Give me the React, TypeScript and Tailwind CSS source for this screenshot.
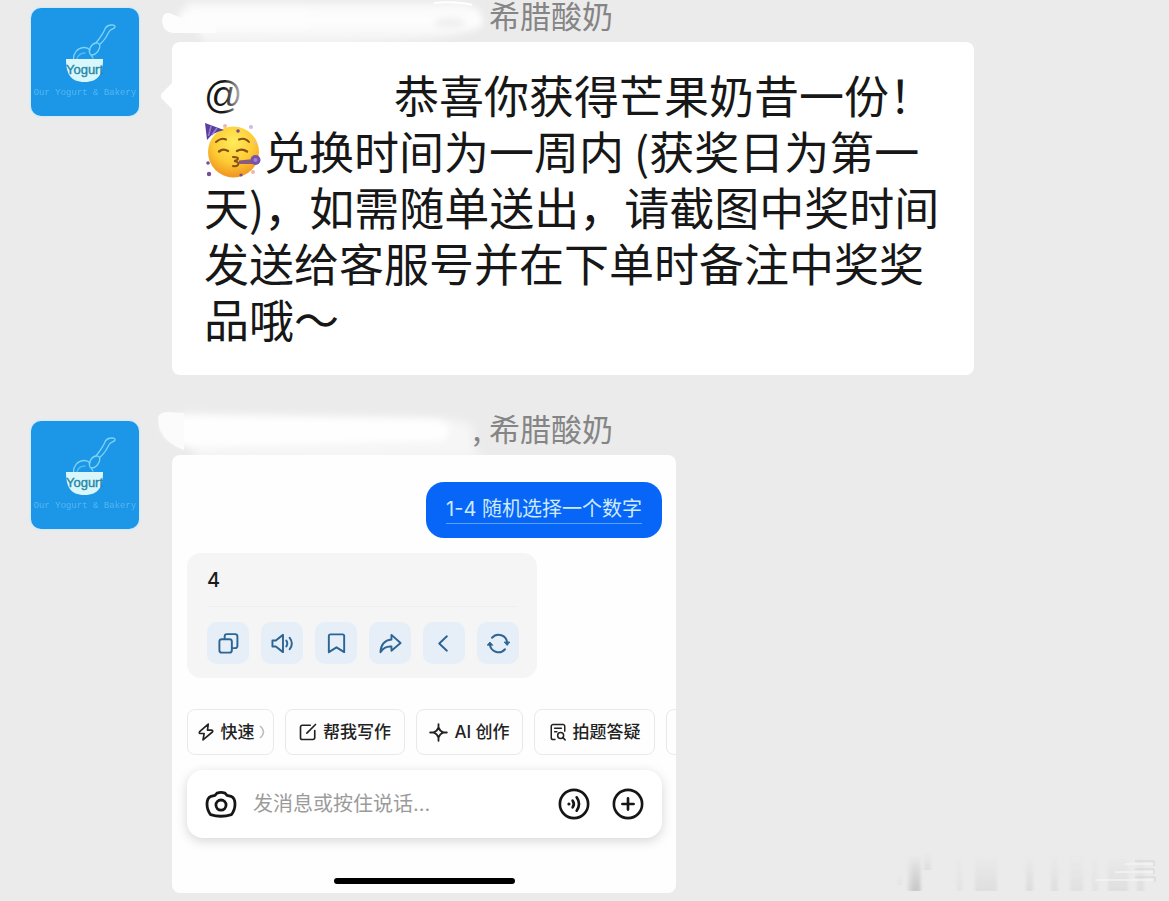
import type { ReactNode } from 'react';

function Avatar() {
  return (
    <svg
      viewBox="0 0 108 108"
      role="img"
      aria-label="Yogurt"
      className="size-[108px] shrink-0 rounded-[10px] bg-[#1c97e8] shadow-[0_0_2px_1px_#cdeafa]"
    >
      <g fill="none" stroke="#7fd3f3" strokeWidth="1.3" strokeLinecap="round" strokeLinejoin="round">
        <path d="M42.500 51c0-6 4-11 10-11.500 3-.2 5 .8 6.500 2.500" />
        <path d="M46 51c1-4 4-6 8-6" opacity=".6" />
        <path d="M59 46c-2-4 1-10 6-11 3-.4 4.500 2 3.500 5-1.200 4-4.500 7-7.500 7-1 0-1.600-.4-2-1z" />
        <path d="M65 35c3-4 7-9 8.500-13 1-3 4-5 7.500-5 2 0 3.500.6 3 2-.4 1.500-3 2-4.500 3-2 1.400-3 5-5 8-1.800 2.600-4 5-5.800 6.500" />
        <path d="M60 47l2 3" />
      </g>
      <path d="M35 51H72c0 14-4 23-18.500 23S35 65 35 51z" fill="#d9f7fb" />
      <text x="53.500" y="66" textAnchor="middle" fontSize="13" fontFamily="'Liberation Sans',sans-serif" fill="#2487a8" stroke="#2487a8" strokeWidth=".4">
        Yogurt
      </text>
      <text x="54" y="87" textAnchor="middle" fontSize="9" fontFamily="'Liberation Mono',monospace" fill="#66c1f3" opacity=".75">
        Our Yogurt &amp; Bakery
      </text>
    </svg>
  );
}

function BrushTop() {
  return (
    <svg aria-hidden="true" viewBox="0 0 340 60" className="absolute -left-3 top-0 h-[60px] w-[340px]">
      <defs>
        <filter id="soft-top" x="-10%" y="-40%" width="120%" height="180%">
          <feGaussianBlur stdDeviation="3" />
        </filter>
        <linearGradient id="fade-top" x1="0" y1="0" x2="0" y2="1">
          <stop offset="0" stopColor="#f7f7f7" />
          <stop offset=".4" stopColor="#fefefe" />
          <stop offset=".75" stopColor="#f6f6f6" />
          <stop offset="1" stopColor="#f1f1f1" />
        </linearGradient>
      </defs>
      <path d="M24 3H300Q326 6 322 26Q300 40 200 42L46 46Z" fill="url(#fade-top)" filter="url(#soft-top)" />
      <path d="M2 20Q3 12 9 13L22 18L56 22V33H12Q2 31 2 20Z" fill="#fdfdfd" />
      <path d="M20 10H150V28H20Z" fill="#fdfdfd" filter="url(#soft-top)" />
      <ellipse cx="290" cy="23" rx="16" ry="5" fill="#efefef" filter="url(#soft-top)" />
      <path d="M274 3Q296 1 312 5" stroke="#fff" strokeWidth="2" fill="none" />
    </svg>
  );
}

function BrushBottom() {
  return (
    <svg aria-hidden="true" viewBox="0 0 340 70" className="absolute -left-4 -top-2 h-[70px] w-[340px]">
      <defs>
        <filter id="soft-bottom" x="-10%" y="-40%" width="120%" height="180%">
          <feGaussianBlur stdDeviation="4" />
        </filter>
      </defs>
      <path d="M24 8L270 12Q312 14 318 24Q312 44 330 52L190 54H40Z" fill="#f6f6f6" filter="url(#soft-bottom)" />
      <path d="M8 11L280 15Q304 22 286 36L34 42Q8 36 6 22Z" fill="#fefefe" filter="url(#soft-top)" />
      <path d="M2 12Q4 7 12 7L28 8V45Q8 38 3 22Z" fill="#fbfbfb" />
    </svg>
  );
}

function Message({ brush, prefix, children }: { brush: ReactNode; prefix?: string; children: ReactNode }) {
  return (
    <article className="flex gap-[33px]">
      <Avatar />
      <div className="-mt-2 min-w-0 flex-1">
        <header className="relative flex h-[42px] text-[31px] leading-[30px] text-[#858585]">
          {brush}
          <span className="relative w-[317px] pr-[8px] text-right">{prefix}</span>
          <span className="relative">希腊酸奶</span>
        </header>
        {children}
      </div>
    </article>
  );
}

function PartyFace() {
  return (
    <svg viewBox="0 0 58 56" role="img" aria-label="🥳" className="mr-0.5 inline-block h-[56px] w-[58px] align-top">
      <defs>
        <radialGradient id="face" cx=".5" cy=".3" r=".75">
          <stop offset="0" stopColor="#ffec5c" />
          <stop offset=".55" stopColor="#fdcb34" />
          <stop offset="1" stopColor="#ee8a1c" />
        </radialGradient>
      </defs>
      <circle cx="29.500" cy="29" r="25.500" fill="url(#face)" />
      <path d="M1 0L20 7Q9 9 3 17Z" fill="#5b3d9e" />
      <path d="M7 3L4.500 13M13 5L8 12" stroke="#9a7fd0" strokeWidth="1.500" />
      <g fill="none" stroke="#885015" strokeLinecap="round">
        <path d="M12 19Q17 14 22 16.500M35 16.500Q41 14 45 19" strokeWidth="2" />
        <path d="M15 28.500Q19 25 24 28M33 28Q38 25 43 28.500" strokeWidth="2.400" />
        <path d="M29 34Q36 34 33 37Q31 38 30 38Q36 39 34 42Q32 44 29 43" strokeWidth="2" />
      </g>
      <path d="M35 37.500L50 36V41L35 41Z" fill="#8b5b7d" />
      <circle cx="51.500" cy="37" r="5" fill="#7652ac" />
      <circle cx="51.500" cy="37" r="2" fill="#a583c8" />
      <g fill="#75508f">
        <circle cx="4" cy="40" r="1.800" />
        <circle cx="5" cy="51" r="2.200" />
        <circle cx="37" cy="52" r="1.600" />
        <circle cx="34" cy="8" r="1.800" />
      </g>
      <g fill="#eab9a4">
        <circle cx="21" cy="3" r="2" />
        <circle cx="49" cy="49" r="2" />
        <circle cx="47" cy="4" r="2" fill="#cdbbe3" />
        <circle cx="51" cy="20" r="1.500" />
      </g>
    </svg>
  );
}

function Icon({ size, width, children }: { size: string; width: string; children: ReactNode }) {
  return (
    <svg aria-hidden="true" viewBox="0 0 24 24" fill="none" stroke="currentColor" strokeWidth={width} strokeLinecap="round" strokeLinejoin="round" className={`${size} shrink-0`}>
      {children}
    </svg>
  );
}

const actions = [
  {
    label: '复制',
    icon: (
      <>
        <rect x="2.500" y="7.500" width="13" height="14" rx="2.500" />
        <path d="M8 7V4.500A2.300 2.300 0 0 1 10.300 2.200H19A2.300 2.300 0 0 1 21.300 4.500V14.500A2.300 2.300 0 0 1 19 16.800H16" />
      </>
    ),
  },
  {
    label: '朗读',
    icon: (
      <>
        <path d="M1.500 8.800H5L12.500 3V21L5 15.200H1.500Z" />
        <path d="M16 9Q18 12 16 15M19.500 6Q24 12 19.500 18" />
      </>
    ),
  },
  {
    label: '收藏',
    icon: <path d="M4 4.300A1.800 1.800 0 0 1 5.800 2.500H18.200A1.800 1.800 0 0 1 20 4.300V21L12 16L4 21Z" />,
  },
  {
    label: '转发',
    icon: <path d="M13 3L22.500 11.500L13 19.500V15.200C8 14.800 4.500 16.500 1.500 21C2 13.500 6 8.500 13 7.800Z" />,
  },
  { label: '上一个', icon: <path d="M14.500 4.500L6.500 12L14.500 19.500" /> },
  {
    label: '重新生成',
    icon: (
      <>
        <path d="M5.200 6A9 9 0 0 1 21 11.500M18.800 18A9 9 0 0 1 3 12.500" />
        <path d="M.5 13.500L3 10.500L5.800 13.500ZM18.200 10.800L21 14L23.500 10.800Z" fill="currentColor" strokeWidth="1" />
      </>
    ),
  },
];

function Chip({ icon, label, width, chevron }: { icon: ReactNode; label: string; width: string; chevron?: boolean }) {
  return (
    <button type="button" className={`${width} flex h-[46px] shrink-0 items-center justify-center gap-1.5 whitespace-nowrap rounded-lg border border-[#e9e9e9] bg-[#fefefe] text-[17px] font-medium leading-none text-[#222]`}>
      {icon}
      <span>{label}</span>
      {chevron && (
        <svg aria-hidden="true" viewBox="0 0 6 16" className="-ml-0.5 h-4 w-1.5" fill="none" stroke="#bdbdbd" strokeWidth="1.500">
          <path d="M1 2Q4.500 5 4.500 8T1 14" />
        </svg>
      )}
    </button>
  );
}

function Screenshot() {
  return (
    <section className="relative flex w-full max-w-[504px] flex-col overflow-hidden rounded-lg bg-[#fefefe] pl-px pt-[27px] pb-[9px] font-['Inter','Noto_Sans_CJK_SC',sans-serif]">
      <p className="mr-3.5 flex h-14 items-center self-end rounded-[18px] bg-[#0765f7] px-5 text-[20px] text-[#cdeafd]">
        <span className="border-b border-[#5ba4f5] leading-[27px]">1-4 随机选择一个数字</span>
      </p>

      <div className="ml-3.5 mt-[15px] h-[125px] w-[350px] rounded-[14px] bg-[#f5f5f5] px-5">
        <p className="flex h-[54px] items-center border-b border-[#eeeeee] text-[20px] font-medium text-[#1c1c1c]">4</p>
        <div className="flex gap-3 pt-[15px]">
          {actions.map((a) => (
            <button key={a.label} type="button" aria-label={a.label} className="flex size-[42px] shrink-0 items-center justify-center rounded-[10px] bg-[#e6eef8] text-[#2c6594]">
              <Icon size="size-[23px]" width="2">{a.icon}</Icon>
            </button>
          ))}
        </div>
      </div>

      <div className="mt-[31px] flex gap-[11px] overflow-hidden pl-3.5">
        <Chip
          width="w-[87px]"
          label="快速"
          chevron
          icon={
            <Icon size="size-[18px]" width="2.2">
              <path d="M15 1.500L3.500 11.500Q2 14 5 14H9.500L8 22.500L20.500 12Q22 9.500 19 9.500H14Z" />
            </Icon>
          }
        />
        <Chip
          width="w-[120px]"
          label="帮我写作"
          icon={
            <Icon size="size-[18px]" width="2.2">
              <path d="M15 3H4.500A2.500 2.500 0 0 0 2 5.500V19.500A2.500 2.500 0 0 0 4.500 22H18.500A2.500 2.500 0 0 0 21 19.500V10M10.500 13.500L22 2" />
            </Icon>
          }
        />
        <Chip
          width="w-[107px]"
          label="AI 创作"
          icon={
            <Icon size="size-[19px]" width="2.3">
              <path d="M12 5.500Q13.500 10.500 18.500 12Q13.500 13.500 12 18.500Q10.500 13.500 5.500 12Q10.500 10.500 12 5.500ZM12 1.500V5.500M12 18.500V22.500M1.500 12H5.500M18.500 12H22.500" />
            </Icon>
          }
        />
        <Chip
          width="w-[121px]"
          label="拍题答疑"
          icon={
            <Icon size="size-[18px]" width="2">
              <path d="M8 22H5.500A2.500 2.500 0 0 1 3 19.500V4.500A2.500 2.500 0 0 1 5.500 2H18.500A2.500 2.500 0 0 1 21 4.500V11M7.500 7H16.500M7.500 11.500H10.500" />
              <circle cx="15.500" cy="16.500" r="4" />
              <path d="M18.500 19.500L21.500 22.500" />
            </Icon>
          }
        />
        <span className="h-[46px] w-16 shrink-0 rounded-lg border border-[#e9e9e9]" />
      </div>

      <form className="mx-3.5 mt-[15px] flex h-[68px] items-center rounded-2xl bg-white pl-[18px] pr-[18px] text-[#161616] shadow-[0_3px_12px_rgba(0,0,0,0.16)]" onSubmit={(e) => e.preventDefault()}>
        <button type="button" aria-label="拍照">
          <Icon size="size-8" width="2.1">
            <path d="M7.500 5.500L9 3.800Q12 2.800 15 3.800L16.500 5.500L19.500 6.200Q22.500 7.500 22.500 12T19.800 20Q16 21.200 12 21.200T4.200 20Q1.500 16.500 1.500 12T4.500 6.200Z" />
            <circle cx="12" cy="12.800" r="3.800" />
          </Icon>
        </button>
        <input aria-label="发消息或按住说话" placeholder="发消息或按住说话..." className="ml-4 min-w-0 flex-1 bg-transparent text-[20px] outline-none placeholder:text-[#9b9b9b]" />
        <button type="button" aria-label="语音">
          <Icon size="size-8" width="2">
            <circle cx="12" cy="12" r="10.600" />
            <circle cx="8.200" cy="12" r=".7" fill="currentColor" strokeWidth="1" />
            <path d="M11 9.500Q12.800 12 11 14.500M14 7Q17.500 12 14 17" />
          </Icon>
        </button>
        <button type="button" aria-label="更多" className="ml-[22px]">
          <Icon size="size-8" width="2">
            <circle cx="12" cy="12" r="10.600" />
            <path d="M12 7.800V16.200M7.800 12H16.200" />
          </Icon>
        </button>
      </form>

      <div className="mt-10 h-1.5 w-[181px] self-center rounded-full bg-black" />
    </section>
  );
}

function Smear() {
  return (
    <svg aria-hidden="true" viewBox="0 0 270 46" className="absolute bottom-2 right-1 h-[46px] w-[270px]">
      <defs>
        <linearGradient id="smear" x1="0" y1="0" x2="0" y2="1">
          <stop offset="0" stopColor="#aaa" stopOpacity="0" />
          <stop offset="1" stopColor="#aaa" stopOpacity=".32" />
        </linearGradient>
        <filter id="smear-blur" x="-10%" y="-10%" width="120%" height="120%">
          <feGaussianBlur stdDeviation="1.5 .6" />
        </filter>
      </defs>
      <g fill="url(#smear)" filter="url(#smear-blur)">
        <rect x="13" y="8" width="13" height="36" />
        <rect x="17" y="8" width="8" height="36" />
        <rect x="29" y="5" width="7" height="18" opacity=".6" />
        <rect x="62" y="8" width="5" height="36" opacity=".4" />
        <rect x="80" y="8" width="22" height="36" opacity=".6" />
        <rect x="131" y="8" width="7" height="36" opacity=".7" />
        <rect x="156" y="8" width="7" height="36" opacity=".6" />
        <rect x="175" y="8" width="13" height="36" opacity=".5" />
        <rect x="197" y="8" width="6" height="36" opacity=".4" />
        <rect x="213" y="8" width="20" height="36" opacity=".6" />
        <rect x="242" y="8" width="7" height="36" opacity=".6" />
        <rect x="3" y="26" width="3" height="12" opacity=".5" />
      </g>
      <path d="M230 17H258M220 25H258M200 33H258" stroke="#f5f5f5" strokeWidth="2" opacity=".7" />
      <path d="M240 14H259V19M240 22H259V27M240 30H260V35" stroke="#d4d4d4" strokeWidth="1" fill="none" />
    </svg>
  );
}

export default function App() {
  return (
    <main className="relative flex min-h-screen flex-col gap-[46px] overflow-hidden bg-[#ebebeb] pl-[31px] pr-4 pt-2 pb-2 font-['Noto_Sans_CJK_SC',sans-serif]">
      <Message brush={<BrushTop />}>
        <div className="relative w-full max-w-[802px] rounded-lg bg-white pb-7 pl-8 pr-6 pt-[25px] text-[45px] leading-[56px] text-[#171717]">
          <svg aria-hidden="true" viewBox="0 0 13 28" className="absolute -left-3 top-10 h-7 w-[13px]">
            <path d="M13 0V28L2 17Q0 14 2 11Z" fill="#fff" />
          </svg>
          <p className="flex whitespace-nowrap">
            <span className="relative w-[190px] font-['Liberation_Sans',sans-serif] text-[38px]">
              @
              <span className="absolute left-5 top-0 h-full w-6 bg-linear-to-r from-white/0 to-white" />
            </span>
            <span>恭喜你获得芒果奶昔一份！</span>
          </p>
          <p className="whitespace-nowrap">
            <PartyFace />
            兑换时间为一周内 (获奖日为第一
          </p>
          <p className="whitespace-nowrap">天)，如需随单送出，请截图中奖时间</p>
          <p className="whitespace-nowrap">发送给客服号并在下单时备注中奖奖</p>
          <p className="whitespace-nowrap">品哦～</p>
        </div>
      </Message>
      <Message brush={<BrushBottom />} prefix=",">
        <Screenshot />
      </Message>
      <Smear />
    </main>
  );
}
